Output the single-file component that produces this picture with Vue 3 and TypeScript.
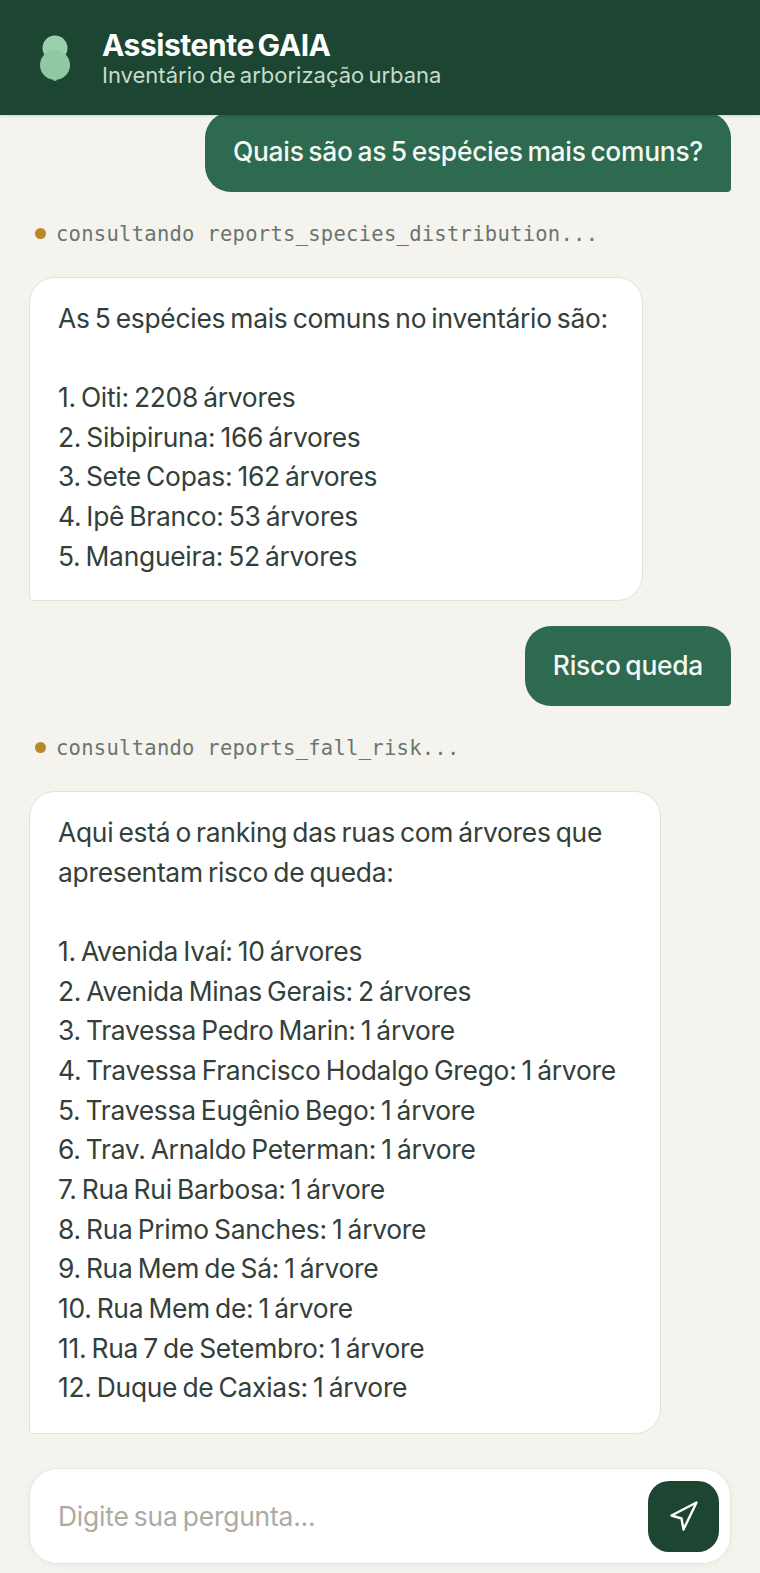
<template>
  <div class="chat">
    <header class="top">
      <svg class="logo" width="34" height="46" viewBox="0 0 34 46">
        <circle cx="17" cy="13" r="12.5" fill="#9ccfab" />
        <circle cx="17" cy="30" r="15" fill="#8fc9a3" />
        <circle cx="17" cy="44" r="2" fill="#8fc9a3" />
      </svg>
      <div class="titles">
        <h1>Assistente GAIA</h1>
        <p>Inventário de arborização urbana</p>
      </div>
    </header>

    <main class="messages">
      <template v-for="(m, i) in messages" :key="i">
        <div v-if="m.tool" class="tool"><span class="dot"></span>consultando {{ m.tool }}...</div>
        <div v-if="m.role === 'user'" class="bubble user">{{ m.text }}</div>
        <div v-else class="bubble bot" :class="m.size">
          <div v-for="(line, j) in m.lines" :key="j" class="line">{{ line }}</div>
        </div>
      </template>
    </main>

    <footer class="composer">
      <input type="text" placeholder="Digite sua pergunta..." />
      <button type="button" aria-label="Enviar">
        <svg width="30" height="30" viewBox="0 0 30 30" fill="none" stroke="#fff" stroke-width="2.4" stroke-linejoin="round" stroke-linecap="round">
          <path d="M27.5 1.5 2.5 14.5l10 3 2 11z" />
        </svg>
      </button>
    </footer>
  </div>
</template>

<script setup lang="ts">
interface Message {
  role: 'user' | 'bot'
  text?: string
  tool?: string
  size?: string
  lines?: string[]
}

const messages: Message[] = [
  { role: 'user', text: 'Quais são as 5 espécies mais comuns?' },
  {
    role: 'bot',
    tool: 'reports_species_distribution',
    size: 'first',
    lines: [
      'As 5 espécies mais comuns no inventário são:',
      '',
      '1. Oiti: 2208 árvores',
      '2. Sibipiruna: 166 árvores',
      '3. Sete Copas: 162 árvores',
      '4. Ipê Branco: 53 árvores',
      '5. Mangueira: 52 árvores'
    ]
  },
  { role: 'user', text: 'Risco queda' },
  {
    role: 'bot',
    tool: 'reports_fall_risk',
    size: 'second',
    lines: [
      'Aqui está o ranking das ruas com árvores que',
      'apresentam risco de queda:',
      '',
      '1. Avenida Ivaí: 10 árvores',
      '2. Avenida Minas Gerais: 2 árvores',
      '3. Travessa Pedro Marin: 1 árvore',
      '4. Travessa Francisco Hodalgo Grego: 1 árvore',
      '5. Travessa Eugênio Bego: 1 árvore',
      '6. Trav. Arnaldo Peterman: 1 árvore',
      '7. Rua Rui Barbosa: 1 árvore',
      '8. Rua Primo Sanches: 1 árvore',
      '9. Rua Mem de Sá: 1 árvore',
      '10. Rua Mem de: 1 árvore',
      '11. Rua 7 de Setembro: 1 árvore',
      '12. Duque de Caxias: 1 árvore'
    ]
  }
]
</script>

<style>
body {
  background: #f5f3ee;
}
</style>

<style scoped>
.chat {
  height: 1573px;
  display: flex;
  flex-direction: column;
  background: #f5f3ee;
  font-family: Inter, "Noto Sans", sans-serif;
  overflow: hidden;
}

.top {
  flex: none;
  height: 115px;
  box-sizing: border-box;
  background: #1c4532;
  display: flex;
  align-items: center;
  gap: 30px;
  padding: 0 0 0 38px;
  position: relative;
  z-index: 1;
  box-shadow: 0 1px 3px rgba(0, 0, 0, 0.15);
}

.titles h1 {
  margin: 0;
  font-size: 30px;
  line-height: 34px;
  font-weight: 700;
  letter-spacing: -0.45px;
  word-spacing: -3px;
  color: #fff;
}

.titles p {
  margin: 0;
  font-size: 22px;
  line-height: 26px;
  letter-spacing: 0;
  word-spacing: -2px;
  color: #c5dccd;
}

.messages {
  flex: 1;
  min-height: 0;
  overflow: hidden;
  display: flex;
  flex-direction: column;
  justify-content: flex-end;
  padding: 0 29px 34px;
}

.bubble {
  flex: none;
  box-sizing: border-box;
  font-size: 26.4px;
  line-height: 39.67px;
  letter-spacing: -0.27px;
  word-spacing: -2px;
}

.user {
  align-self: flex-end;
  background: #2d6a4f;
  color: #f4f8f5;
  padding: 20px 28px;
  border-radius: 26px 26px 4px 26px;
  margin-bottom: 25px;
  font-weight: 500;
}

.bot {
  align-self: flex-start;
  background: #fff;
  border: 1px solid #e4e1d8;
  color: #33403a;
  padding: 21px 28px 25px;
  border-radius: 26px 26px 26px 4px;
  margin-bottom: 25px;
}

.bot.first {
  width: 614px;
  padding-bottom: 24px;
}

.bot.second {
  width: 632px;
  margin-bottom: 0;
}

.line {
  min-height: 39.67px;
  white-space: nowrap;
}

.tool {
  flex: none;
  display: flex;
  align-items: center;
  gap: 10px;
  padding-left: 6px;
  height: 26px;
  margin: 4px 0 30px;
  font-family: "DejaVu Sans Mono", monospace;
  font-size: 20.5px;
  color: #6a756e;
  letter-spacing: 0.27px;
}

.dot {
  width: 11px;
  height: 11px;
  border-radius: 50%;
  background: #b8892b;
}

.composer {
  flex: none;
  box-sizing: border-box;
  height: 96px;
  margin: 0 29px 9px;
  background: #fff;
  border: 1px solid #e8e5dd;
  border-radius: 28px;
  display: flex;
  align-items: center;
  padding: 0 11px 0 26px;
  box-shadow: 0 2px 8px rgba(0, 0, 0, 0.04);
}

.composer input {
  flex: 1;
  min-width: 0;
  border: 0;
  outline: 0;
  background: transparent;
  font: inherit;
  font-size: 26.4px;
  letter-spacing: -0.2px;
  word-spacing: -2px;
  color: #2a332e;
}

.composer input::placeholder {
  color: #aeaaa2;
}

.composer button {
  flex: none;
  width: 71px;
  height: 71px;
  border: 0;
  padding: 0;
  border-radius: 21px;
  background: #1c4532;
  display: flex;
  align-items: center;
  justify-content: center;
}
</style>
